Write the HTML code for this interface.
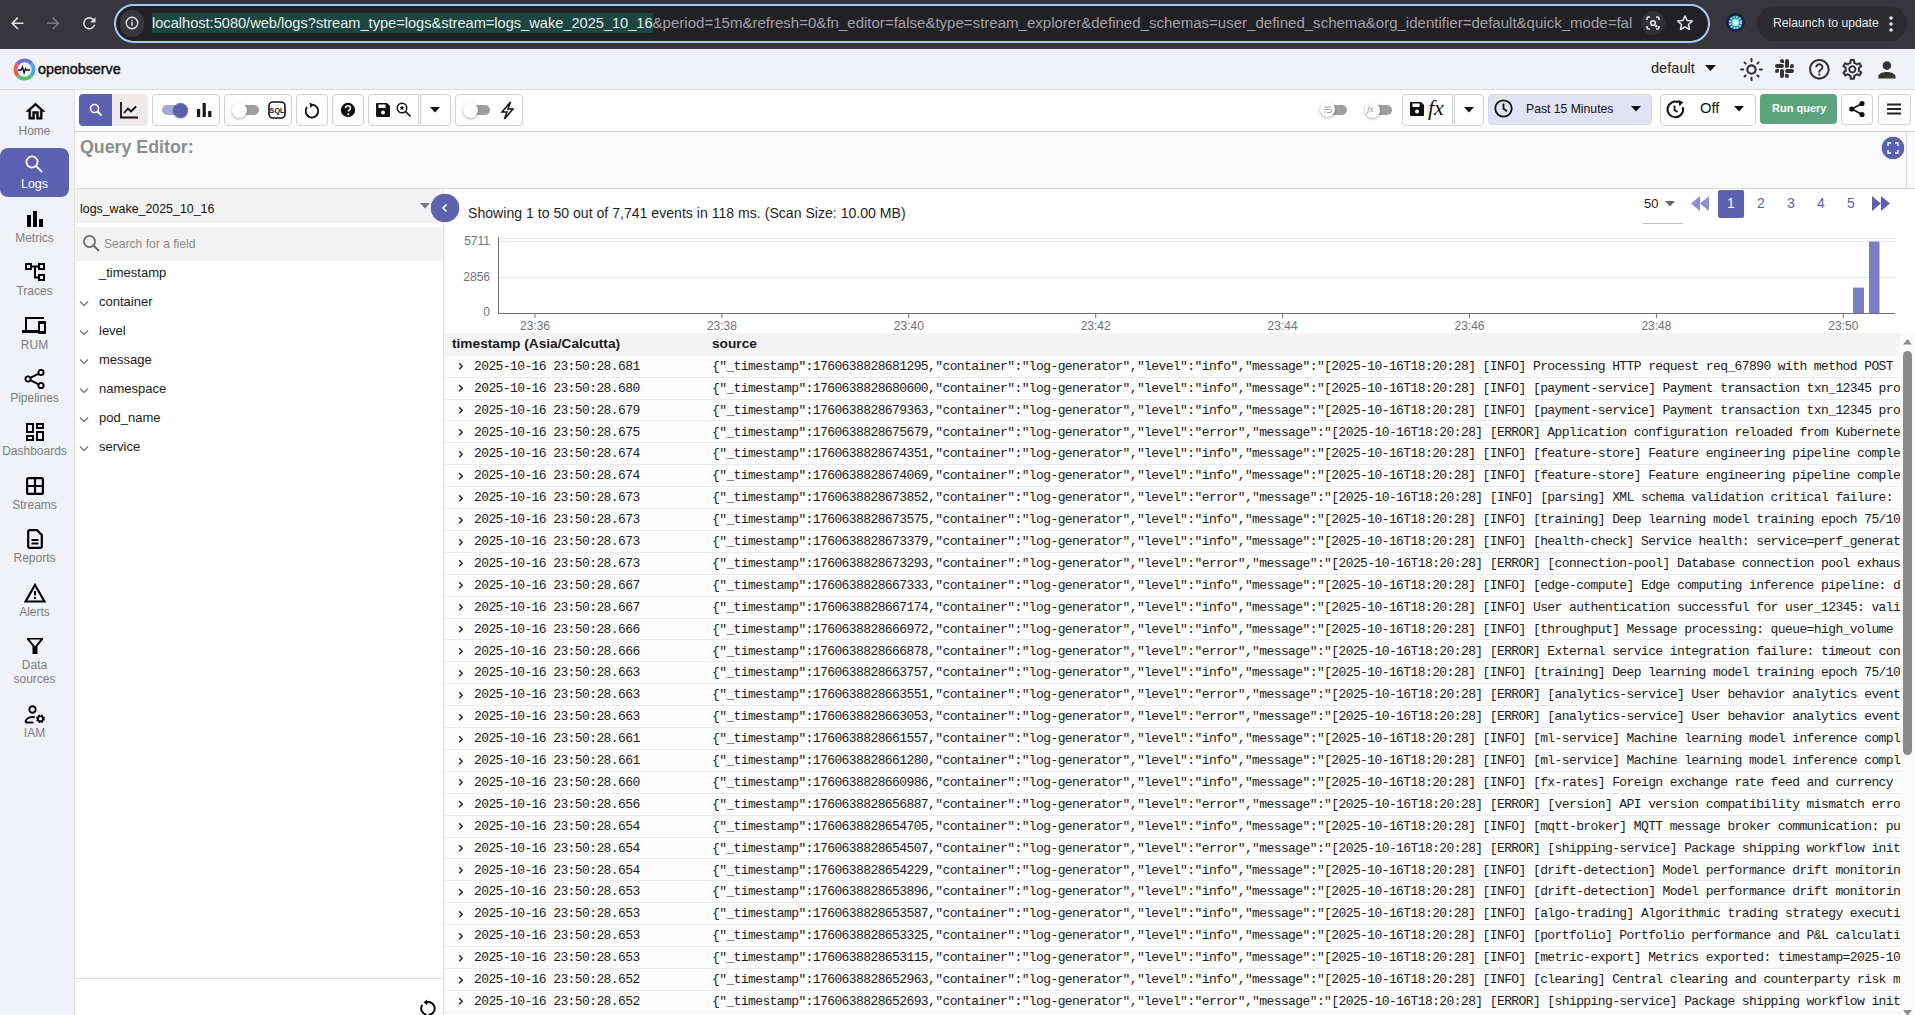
<!DOCTYPE html>
<html><head><meta charset="utf-8">
<style>
*{box-sizing:border-box;margin:0;padding:0}
html,body{width:1915px;height:1015px;overflow:hidden;background:#fff;font-family:"Liberation Sans",sans-serif;color:#000}
.abs{position:absolute}
svg{position:absolute;display:block}
/* chrome */
#chrome{position:absolute;left:0;top:0;width:1915px;height:49px;background:#37363c}
#omni{position:absolute;left:114px;top:4px;width:1596px;height:39px;border:2px solid #a8c7fa;border-radius:20px;background:#212125}
#url{position:absolute;left:152px;top:13px;height:20px;line-height:20px;font-size:14.6px;color:#a0a0a6;white-space:nowrap}
#url .sel{background:#1b4641;color:#e9ecec;display:inline-block;height:20px;line-height:20px;vertical-align:top}
#relaunch{position:absolute;left:1757px;top:6px;width:150px;height:35px;border-radius:18px;background:#2b2b30}
#relaunch span{position:absolute;left:16px;top:10px;font-size:12.2px;color:#e8e8ea;white-space:nowrap}
/* header */
#header{position:absolute;left:0;top:49px;width:1915px;height:41px;background:#f1f2f7;border-bottom:1px solid #dadada}
#logo-text{position:absolute;left:38px;top:61px;font-size:14.3px;font-weight:normal;-webkit-text-stroke:0.45px #111;color:#111}
#org{position:absolute;left:1651px;top:60px;font-size:14.6px;color:#222}
/* sidebar */
#side{position:absolute;left:0;top:90px;width:75px;height:925px;background:#f1f2f7;border-right:1px solid #dedede}
.nav{position:absolute;left:0px;width:69px;text-align:center;font-size:12px;color:#7d7d7d;line-height:14px}
#logsbox{position:absolute;left:0;top:148px;width:69px;height:49px;background:#5b60b1;border-radius:8px}
/* toolbar */
#toolbar{position:absolute;left:75px;top:90px;width:1840px;height:42px;background:#fff;border-bottom:1px solid #d8d8d8}
.btn{position:absolute;top:94px;height:32px;border:1px solid #cfcfcf;border-radius:4px;background:#fff}
/* query editor */
#qe{position:absolute;left:75px;top:132px;width:1840px;height:57px;background:#fafafa;border-bottom:1px solid #d8d8d8}
#qe-label{position:absolute;left:80px;top:137px;font-size:17.8px;font-weight:bold;color:#8d8d8d}
/* fields */
#fields{position:absolute;left:75px;top:189px;width:369px;height:826px;background:#fff;border-right:1px solid #e0e0e0}
#stream{position:absolute;left:75px;top:189px;width:368px;height:34px;background:#f2f2f2}
#fsearch{position:absolute;left:75px;top:227px;width:368px;height:34px;background:#f2f2f2}
.fname{position:absolute;left:99px;font-size:13px;color:#1a1a1a;white-space:nowrap}
/* results */
#showing{position:absolute;left:468px;top:205px;font-size:14.1px;color:#1f1f1f;white-space:nowrap}
.pg{position:absolute;top:195px;font-size:14px;color:#5b60b1}
.ylab{position:absolute;font-size:12px;color:#6e7079;text-align:right;width:40px;left:450px}
.xlab{position:absolute;top:319px;font-size:12px;color:#6e7079;width:50px;text-align:center}
#thead{position:absolute;left:444px;top:333px;width:1456px;height:23px;background:#f4f4f4}
.th{position:absolute;top:336px;font-size:13.7px;font-weight:bold;color:#1a1a1a;white-space:nowrap}
.row{position:absolute;left:444px;width:1456px;height:21.9px;border-bottom:1px solid #e9eaee;background:#fdfdfd;overflow:hidden;white-space:nowrap;font-family:"Liberation Mono",monospace;font-size:13px;letter-spacing:-0.6px;color:#1a1a1a}
.row svg{left:14px;top:6.5px}
.row .ts{position:absolute;left:30px;top:3px}
.row .src{position:absolute;left:268px;top:3px}
#sb{position:absolute;left:1900px;top:333px;width:15px;height:682px;background:#fafafa}
#thumb{position:absolute;left:1903px;top:351px;width:9px;height:404px;background:#8a8a8a;border-radius:5px}
</style></head><body>

<div id="chrome"></div>
<!-- back / fwd / reload -->
<svg style="left:7.8px;top:13.9px" width="18.6" height="18.6" viewBox="0 0 24 24"><path d="M20 11H7.83l5.59-5.59L12 4l-8 8 8 8 1.41-1.41L7.83 13H20v-2z" fill="#e3e3e3"/></svg>
<svg style="left:43.7px;top:13.9px" width="18.6" height="18.6" viewBox="0 0 24 24"><path d="M12 4l-1.41 1.41L16.17 11H4v2h12.17l-5.58 5.59L12 20l8-8z" fill="#7b7b80"/></svg>
<svg style="left:79.7px;top:13.6px" width="18.6" height="18.6" viewBox="0 0 24 24"><path d="M17.65 6.35A7.958 7.958 0 0 0 12 4a8 8 0 1 0 7.73 10h-2.08A6 6 0 1 1 12 6c1.66 0 3.14.69 4.22 1.78L13 11h7V4l-2.35 2.35z" fill="#e3e3e3"/></svg>
<div id="omni"></div>
<div class="abs" style="left:120px;top:10px;width:24px;height:27px;border-radius:13px;background:#36363b"></div>
<svg style="left:125px;top:16px" width="14" height="14" viewBox="0 0 14 14"><circle cx="7" cy="7" r="5.8" fill="none" stroke="#e6e6e6" stroke-width="1.4"/><rect x="6.3" y="6" width="1.4" height="4" fill="#e6e6e6"/><rect x="6.3" y="3.8" width="1.4" height="1.4" fill="#e6e6e6"/></svg>
<div id="url"><span class="sel">localhost:5080/web/logs?stream_type=logs&amp;stream=logs_wake_2025_10_16</span><span style="font-size:15.04px">&amp;period=15m&amp;refresh=0&amp;fn_editor=false&amp;type=stream_explorer&amp;defined_schemas=user_defined_schema&amp;org_identifier=default&amp;quick_mode=fal</span></div>
<div class="abs" style="left:1641px;top:11px;width:24px;height:24px;border-radius:12px;background:#303035"></div>
<svg style="left:1644px;top:14px" width="18" height="18" viewBox="0 0 18 18"><path d="M3 6V4.5A1.5 1.5 0 0 1 4.5 3H6M12 3h1.5A1.5 1.5 0 0 1 15 4.5V6M15 12v1.5a1.5 1.5 0 0 1-1.5 1.5H12M6 15H4.5A1.5 1.5 0 0 1 3 13.5V12" fill="none" stroke="#e6e6e6" stroke-width="1.6"/><circle cx="9" cy="9" r="2.3" fill="none" stroke="#e6e6e6" stroke-width="1.6"/><circle cx="12.3" cy="12.3" r="1.2" fill="#e6e6e6"/></svg>
<svg style="left:1675px;top:13px" width="20" height="20" viewBox="0 0 24 24"><path d="M12 3.5l2.6 5.6 6.1.6-4.6 4.1 1.3 6-5.4-3.1-5.4 3.1 1.3-6-4.6-4.1 6.1-.6z" fill="none" stroke="#e3e3e3" stroke-width="1.8" stroke-linejoin="round"/></svg>
<svg style="left:1724.5px;top:12.2px" width="21" height="21" viewBox="0 0 21 21"><circle cx="10.5" cy="10.5" r="9.5" fill="#1f1f45"/><circle cx="10.5" cy="10.5" r="7" fill="#1d6f8c"/><circle cx="10.5" cy="10.5" r="5.6" fill="none" stroke="#8eeaf5" stroke-width="2" stroke-dasharray="1.6 1.33"/><circle cx="10.5" cy="10.5" r="4" fill="#7fd9e6"/><circle cx="10.5" cy="10.5" r="2.5" fill="#f0ffff"/></svg>
<div id="relaunch"><span>Relaunch to update</span></div>
<svg style="left:1887px;top:14px" width="8" height="20" viewBox="0 0 8 20"><circle cx="4" cy="4" r="1.8" fill="#e3e3e3"/><circle cx="4" cy="10" r="1.8" fill="#e3e3e3"/><circle cx="4" cy="16" r="1.8" fill="#e3e3e3"/></svg>

<!-- app header -->
<div id="header"></div>
<svg style="left:13px;top:58px" width="23" height="23" viewBox="0 0 23 23">
<path d="M4.2 6.2 A9 9 0 0 1 18.3 5.5" fill="none" stroke="#6d6ee0" stroke-width="3.8"/>
<path d="M18.3 5.5 A9 9 0 0 1 17.8 18" fill="none" stroke="#45a5f0" stroke-width="3.8"/>
<path d="M17.8 18 A9 9 0 0 1 5 18" fill="none" stroke="#55c06e" stroke-width="3.8"/>
<path d="M5 18 A9 9 0 0 1 4.2 6.2" fill="none" stroke="#ef5a4a" stroke-width="3.8"/>
<path d="M5 12h3.2l1.3-3 1.6 6 1.4-4.5 0.9 1.5h3.6" fill="none" stroke="#111" stroke-width="1.3"/>
</svg>
<div id="logo-text">openobserve</div>
<div id="org">default</div>
<svg style="left:1705px;top:65px" width="12" height="7" viewBox="0 0 12 7"><path d="M0 0h11L5.5 6z" fill="#111"/></svg>
<!-- sun -->
<svg style="left:1739px;top:57px" width="25" height="25" viewBox="0 0 24 24"><path d="M12 9c1.65 0 3 1.35 3 3s-1.35 3-3 3-3-1.35-3-3 1.35-3 3-3m0-2c-2.76 0-5 2.24-5 5s2.24 5 5 5 5-2.24 5-5-2.24-5-5-5zM2 13h2c.55 0 1-.45 1-1s-.45-1-1-1H2c-.55 0-1 .45-1 1s.45 1 1 1zm18 0h2c.55 0 1-.45 1-1s-.45-1-1-1h-2c-.55 0-1 .45-1 1s.45 1 1 1zM11 2v2c0 .55.45 1 1 1s1-.45 1-1V2c0-.55-.45-1-1-1s-1 .45-1 1zm0 18v2c0 .55.45 1 1 1s1-.45 1-1v-2c0-.55-.45-1-1-1s-1 .45-1 1zM5.99 4.58a.996.996 0 0 0-1.41 0 .996.996 0 0 0 0 1.41l1.06 1.06c.39.39 1.03.39 1.41 0s.39-1.03 0-1.41L5.99 4.58zm12.37 12.37a.996.996 0 0 0-1.41 0 .996.996 0 0 0 0 1.41l1.06 1.06c.39.39 1.03.39 1.41 0a.996.996 0 0 0 0-1.41l-1.06-1.06zm1.06-10.96a.996.996 0 0 0 0-1.41.996.996 0 0 0-1.41 0l-1.06 1.06c-.39.39-.39 1.03 0 1.41s1.03.39 1.41 0l1.06-1.06zM7.05 18.36a.996.996 0 0 0 0-1.41.996.996 0 0 0-1.41 0l-1.06 1.06c-.39.39-.39 1.030 0 1.41s1.03.39 1.41 0l1.06-1.06z" fill="#333"/></svg>
<!-- slack -->
<svg style="left:1775px;top:59px" width="19" height="19" viewBox="0 0 24 24"><path d="M5.042 15.165a2.528 2.528 0 0 1-2.52 2.523A2.528 2.528 0 0 1 0 15.165a2.527 2.527 0 0 1 2.522-2.52h2.52v2.52zM6.313 15.165a2.527 2.527 0 0 1 2.521-2.52 2.527 2.527 0 0 1 2.521 2.52v6.313A2.528 2.528 0 0 1 8.834 24a2.528 2.528 0 0 1-2.521-2.522v-6.313zM8.834 5.042a2.528 2.528 0 0 1-2.521-2.52A2.528 2.528 0 0 1 8.834 0a2.528 2.528 0 0 1 2.521 2.522v2.52H8.834zM8.834 6.313a2.528 2.528 0 0 1 2.521 2.521 2.528 2.528 0 0 1-2.521 2.521H2.522A2.528 2.528 0 0 1 0 8.834a2.528 2.528 0 0 1 2.522-2.521h6.312zM18.956 8.834a2.528 2.528 0 0 1 2.522-2.521A2.528 2.528 0 0 1 24 8.834a2.528 2.528 0 0 1-2.522 2.521h-2.522V8.834zM17.688 8.834a2.528 2.528 0 0 1-2.523 2.521 2.527 2.527 0 0 1-2.52-2.521V2.522A2.527 2.527 0 0 1 15.165 0a2.528 2.528 0 0 1 2.523 2.522v6.312zM15.165 18.956a2.528 2.528 0 0 1 2.523 2.522A2.528 2.528 0 0 1 15.165 24a2.527 2.527 0 0 1-2.52-2.522v-2.522h2.52zM15.165 17.688a2.527 2.527 0 0 1-2.52-2.523 2.526 2.526 0 0 1 2.52-2.52h6.313A2.527 2.527 0 0 1 24 15.165a2.528 2.528 0 0 1-2.522 2.523h-6.313z" fill="#333"/></svg>
<!-- help -->
<svg style="left:1806.7px;top:57px" width="24.7" height="24.7" viewBox="0 0 24 24"><path d="M11 18h2v-2h-2v2zm1-16C6.48 2 2 6.48 2 12s4.48 10 10 10 10-4.48 10-10S17.52 2 12 2zm0 18c-4.41 0-8-3.59-8-8s3.59-8 8-8 8 3.59 8 8-3.59 8-8 8zm0-14c-2.21 0-4 1.79-4 4h2c0-1.1.9-2 2-2s2 .9 2 2c0 2-3 1.75-3 5h2c0-2.25 3-2.5 3-5 0-2.21-1.79-4-4-4z" fill="#333"/></svg>
<!-- gear -->
<svg style="left:1839.5px;top:57px" width="24.7" height="24.7" viewBox="0 0 24 24"><path d="M19.43 12.98c.04-.32.07-.64.07-.98 0-.34-.03-.66-.07-.98l2.11-1.65c.19-.15.24-.42.12-.64l-2-3.46a.5.5 0 0 0-.61-.22l-2.49 1c-.52-.4-1.08-.73-1.69-.98l-.38-2.65A.488.488 0 0 0 14 2h-4c-.25 0-.46.18-.49.42l-.38 2.65c-.61.25-1.17.59-1.69.98l-2.49-1a.566.566 0 0 0-.18-.03c-.17 0-.34.09-.43.25l-2 3.46c-.13.22-.07.49.12.64l2.11 1.65c-.04.32-.07.65-.07.98 0 .33.03.66.07.98l-2.11 1.65c-.19.15-.24.42-.12.64l2 3.46a.5.5 0 0 0 .61.22l2.49-1c.52.4 1.08.73 1.69.98l.38 2.65c.03.24.24.42.49.42h4c.25 0 .46-.18.49-.42l.38-2.65c.61-.25 1.17-.59 1.69-.98l2.49 1c.06.02.12.03.18.03.17 0 .34-.09.43-.25l2-3.46c.12-.22.07-.49-.12-.64l-2.11-1.65zm-1.98-1.71c.04.31.05.52.05.73 0 .21-.02.43-.05.73l-.14 1.13.89.7 1.08.84-.7 1.21-1.27-.51-1.04-.42-.9.68c-.43.32-.84.56-1.250.73l-1.06.43-.16 1.13-.2 1.35h-1.4l-.19-1.35-.16-1.13-1.06-.43c-.43-.18-.83-.41-1.23-.71l-.91-.7-1.06.43-1.27.51-.7-1.21 1.08-.84.89-.7-.14-1.13c-.03-.31-.05-.54-.05-.74s.02-.43.05-.73l.14-1.13-.89-.7-1.08-.84.7-1.21 1.27.51 1.04.42.9-.68c.43-.32.84-.56 1.25-.73l1.06-.43.16-1.13.2-1.35h1.39l.19 1.35.16 1.13 1.06.43c.43.18.83.41 1.23.71l.91.7 1.06-.43 1.27-.51.7 1.21-1.07.85-.89.7.14 1.13zM12 8c-2.21 0-4 1.79-4 4s1.79 4 4 4 4-1.79 4-4-1.79-4-4-4zm0 6c-1.1 0-2-.9-2-2s.9-2 2-2 2 .9 2 2-.9 2-2 2z" fill="#333"/></svg>
<!-- person -->
<svg style="left:1873.5px;top:56.7px" width="25.8" height="25.8" viewBox="0 0 24 24"><path d="M12 12c2.21 0 4-1.79 4-4s-1.79-4-4-4-4 1.79-4 4 1.79 4 4 4zm0 2c-2.67 0-8 1.34-8 4v2h16v-2c0-2.66-5.33-4-8-4z" fill="#333"/></svg>

<!-- sidebar -->
<div id="side"></div>
<div id="logsbox"></div>
<svg style="left:23.5px;top:100px" width="23" height="23" viewBox="0 0 24 24"><path d="M12 5.69l5 4.5V18h-2v-6H9v6H7v-7.81l5-4.5M12 3L2 12h3v8h6v-6h2v6h6v-8h3L12 3z" fill="#000" stroke="#000" stroke-width="0.5"/></svg>
<div class="nav" style="top:124px">Home</div>
<svg style="left:23px;top:153px" width="20" height="20" viewBox="0 0 20 20"><circle cx="9" cy="9" r="5.6" fill="none" stroke="#fff" stroke-width="1.8"/><path d="M13.2 13.2l5.3 5.3" stroke="#fff" stroke-width="1.9" stroke-linecap="round"/></svg>
<div class="nav" style="top:177px;color:#fff;font-size:12.5px">Logs</div>
<svg style="left:27px;top:211px" width="16" height="16" viewBox="0 0 16 16"><rect x="0" y="4" width="4" height="12" fill="#000"/><rect x="6" y="0" width="4" height="16" fill="#000"/><rect x="12" y="8" width="4" height="8" fill="#000"/></svg>
<div class="nav" style="top:231px">Metrics</div>
<svg style="left:25px;top:263px" width="20" height="18" viewBox="0 0 20 18"><g fill="none" stroke="#000" stroke-width="2"><rect x="1" y="1" width="5" height="5"/><rect x="14" y="1" width="5" height="5"/><rect x="14" y="12" width="5" height="5"/><path d="M6 3.5h8M10 3.5v11h4"/></g></svg>
<div class="nav" style="top:284px">Traces</div>
<svg style="left:22px;top:317px" width="25" height="17" viewBox="0 0 25 17"><g fill="#000"><rect x="3" y="0" width="19" height="2"/><rect x="3" y="0" width="2" height="14"/><rect x="0" y="13" width="16" height="3"/><rect x="16" y="4" width="8" height="13" rx="1"/></g><rect x="18" y="7" width="4" height="7" fill="#f1f2f7"/></svg>
<div class="nav" style="top:338px">RUM</div>
<svg style="left:24px;top:369px" width="21" height="20" viewBox="0 0 21 20"><g fill="none" stroke="#000" stroke-width="1.9"><circle cx="4" cy="10" r="2.6"/><circle cx="17" cy="3.5" r="2.6"/><circle cx="17" cy="16.5" r="2.6"/><path d="M6.3 8.8l8.4-4.1M6.3 11.2l8.4 4.1"/></g></svg>
<div class="nav" style="top:391px">Pipelines</div>
<svg style="left:26px;top:423px" width="18" height="18" viewBox="0 0 18 18"><g fill="none" stroke="#000" stroke-width="2"><rect x="1" y="1" width="6" height="8"/><rect x="11" y="1" width="6" height="4"/><rect x="11" y="9" width="6" height="8"/><rect x="1" y="13" width="6" height="4"/></g></svg>
<div class="nav" style="top:444px">Dashboards</div>
<svg style="left:26px;top:477px" width="18" height="18" viewBox="0 0 18 18"><g fill="none" stroke="#000" stroke-width="2.2"><rect x="1.1" y="1.1" width="15.8" height="15.8" rx="1.5"/><path d="M9 1v16M1 9h16"/></g></svg>
<div class="nav" style="top:498px">Streams</div>
<svg style="left:27px;top:529px" width="16" height="20" viewBox="0 0 16 20"><path d="M1.2 2.5a1.3 1.3 0 0 1 1.3-1.3h7.5l4.8 4.8v11.5a1.3 1.3 0 0 1-1.3 1.3h-11a1.3 1.3 0 0 1-1.3-1.3z" fill="none" stroke="#000" stroke-width="2.2"/><path d="M4.5 11h7M4.5 14.5h7" stroke="#000" stroke-width="2"/></svg>
<div class="nav" style="top:551px">Reports</div>
<svg style="left:24px;top:583px" width="22" height="20" viewBox="0 0 22 20"><path d="M11 2L1.5 18.5h19z" fill="none" stroke="#000" stroke-width="2.2" stroke-linejoin="miter"/><rect x="10" y="8" width="2" height="4.5" fill="#000"/><rect x="10" y="14" width="2" height="2" fill="#000"/></svg>
<div class="nav" style="top:605px">Alerts</div>
<svg style="left:27px;top:638px" width="16" height="16" viewBox="0 0 16 16"><path d="M0.5 0.5h15L9.5 8v7.5h-3V8z" fill="none" stroke="#000" stroke-width="2" stroke-linejoin="miter"/><rect x="6.5" y="8" width="3" height="7.5" fill="#000"/></svg>
<div class="nav" style="top:658px">Data<br>sources</div>
<svg style="left:24px;top:705px" width="22" height="19" viewBox="0 0 22 19"><g fill="none" stroke="#000" stroke-width="1.9"><circle cx="8.5" cy="4.5" r="3.2"/><path d="M1.5 17.5c0-3.5 3-5.5 7-5.5 .8 0 1.6.1 2.3.3"/><path d="M1.5 17.5h8"/></g><circle cx="16.5" cy="13.8" r="3.1" fill="none" stroke="#000" stroke-width="2.6" stroke-dasharray="1.5 0.95"/><circle cx="16.5" cy="13.8" r="2.6" fill="none" stroke="#000" stroke-width="1.6"/></svg>
<div class="nav" style="top:726px">IAM</div>

<!-- toolbar -->
<div id="toolbar"></div>
<div class="abs" style="left:79px;top:94px;width:33px;height:32px;background:#5b60b1;border-radius:4px 0 0 4px"></div>
<div class="abs" style="left:112px;top:94px;width:36px;height:32px;background:#efe9e9;border-radius:0 4px 4px 0"></div>
<svg style="left:88px;top:102px" width="16" height="16" viewBox="0 0 16 16"><circle cx="6.5" cy="6.5" r="4" fill="none" stroke="#fff" stroke-width="1.6"/><path d="M9.5 9.5l4 4" stroke="#fff" stroke-width="1.8"/></svg>
<svg style="left:120px;top:101px" width="19" height="18" viewBox="0 0 19 18"><path d="M1 1v15.5h17" fill="none" stroke="#111" stroke-width="1.8"/><path d="M4 12l4-4.5 3 3 5-5" fill="none" stroke="#111" stroke-width="1.8"/></svg>

<div class="btn" style="left:152px;width:68px"></div>
<div class="abs" style="left:162px;top:105px;width:24px;height:10px;border-radius:5px;background:#a5a8d8"></div>
<div class="abs" style="left:173px;top:103px;width:15px;height:15px;border-radius:8px;background:#5b60b1;box-shadow:0 1px 2px rgba(0,0,0,.25)"></div>
<svg style="left:197px;top:103px" width="15" height="14" viewBox="0 0 15 14"><rect x="0" y="6" width="3.2" height="8" fill="#1a1a1a"/><rect x="5.6" y="0" width="3.2" height="14" fill="#1a1a1a"/><rect x="11.2" y="8" width="3.2" height="6" fill="#1a1a1a"/></svg>

<div class="btn" style="left:224px;width:68px"></div>
<div class="abs" style="left:235px;top:105px;width:24px;height:10px;border-radius:5px;background:#9e9e9e"></div>
<div class="abs" style="left:232px;top:103px;width:15px;height:15px;border-radius:8px;background:#fff;box-shadow:0 1px 3px rgba(0,0,0,.35)"></div>
<svg style="left:268px;top:101px" width="18" height="18" viewBox="0 0 18 18"><rect x="1" y="1" width="16" height="16" rx="4" fill="none" stroke="#111" stroke-width="1.6"/><text x="9" y="12.3" font-family="Liberation Sans" font-size="7.2" font-weight="bold" text-anchor="middle" fill="#111">SQL</text></svg>

<div class="btn" style="left:296px;width:32px"></div>
<svg style="left:302px;top:101px" width="20" height="20" viewBox="0 0 20 20"><path d="M5 6.2A6.3 6.3 0 1 0 10 3.8" fill="none" stroke="#111" stroke-width="1.9"/><path d="M7.5 1.2l4 2.6-3.2 3.2z" fill="#111"/></svg>

<div class="btn" style="left:332px;width:32px;border-color:#c9cbee"></div>
<svg style="left:340px;top:102px" width="16" height="16" viewBox="0 0 16 16"><circle cx="8" cy="8" r="7.2" fill="#111"/><path d="M5.6 6.2a2.4 2.4 0 0 1 4.8 0c0 1.6-2.1 1.6-2.1 3.4" fill="none" stroke="#fff" stroke-width="1.6"/><circle cx="8.3" cy="12.2" r="1" fill="#fff"/></svg>

<div class="btn" style="left:368px;width:51px;border-radius:4px 0 0 4px"></div>
<div class="btn" style="left:420px;width:31px;border-radius:0 4px 4px 0"></div>
<svg style="left:375px;top:102px" width="16" height="16" viewBox="0 0 16 16"><path d="M1 2a1 1 0 0 1 1-1h10l3 3v10a1 1 0 0 1-1 1H2a1 1 0 0 1-1-1z" fill="#111"/><rect x="3.5" y="2.5" width="7" height="3.5" fill="#fff"/><circle cx="8" cy="10.5" r="2" fill="#fff"/></svg>
<svg style="left:396px;top:102px" width="16" height="16" viewBox="0 0 16 16"><circle cx="6" cy="6" r="4.8" fill="none" stroke="#111" stroke-width="1.4"/><path d="M9.5 9.5l5 5" stroke="#111" stroke-width="1.7"/><path d="M6 3.4l.8 1.6 1.7.2-1.3 1.2.4 1.7L6 7.2l-1.6.9.4-1.7-1.3-1.2 1.7-.2z" fill="#111"/></svg>
<svg style="left:430px;top:107px" width="10" height="6" viewBox="0 0 10 6"><path d="M0 0h10L5 5.5z" fill="#111"/></svg>

<div class="btn" style="left:455px;width:68px"></div>
<div class="abs" style="left:466px;top:105px;width:24px;height:10px;border-radius:5px;background:#9e9e9e"></div>
<div class="abs" style="left:463px;top:103px;width:15px;height:15px;border-radius:8px;background:#fff;box-shadow:0 1px 3px rgba(0,0,0,.35)"></div>
<svg style="left:500px;top:101px" width="15" height="19" viewBox="0 0 15 19"><path d="M10.5 1L2 11h5l-2.5 7L13 8H8z" fill="none" stroke="#111" stroke-width="1.5" stroke-linejoin="miter"/></svg>

<!-- right toolbar -->
<div class="abs" style="left:1327px;top:105px;width:20px;height:10px;border-radius:5px;background:#9e9e9e"></div>
<div class="abs" style="left:1320px;top:102px;width:15px;height:15px;border-radius:8px;background:#fff;box-shadow:0 1px 3px rgba(0,0,0,.35)"></div>
<svg style="left:1323px;top:105px" width="9" height="9" viewBox="0 0 9 9"><path d="M1 2h7M1 4.5h6a1.5 1.5 0 0 1 0 3H4M1 7h2" fill="none" stroke="#999" stroke-width=".9"/></svg>
<div class="abs" style="left:1372px;top:105px;width:20px;height:10px;border-radius:5px;background:#9e9e9e"></div>
<div class="abs" style="left:1365px;top:103px;width:15px;height:15px;border-radius:8px;background:#fff;box-shadow:0 1px 3px rgba(0,0,0,.35)"></div>
<div class="abs" style="left:1367px;top:104px;font-family:'Liberation Serif',serif;font-style:italic;font-size:9px;color:#888">fx</div>

<div class="btn" style="left:1402px;width:51px;border-radius:4px 0 0 4px"></div>
<div class="btn" style="left:1454px;width:30px;border-radius:0 4px 4px 0"></div>
<svg style="left:1409px;top:101px" width="16" height="16" viewBox="0 0 16 16"><path d="M1 2a1 1 0 0 1 1-1h10l3 3v10a1 1 0 0 1-1 1H2a1 1 0 0 1-1-1z" fill="#111"/><rect x="3.5" y="2.5" width="7" height="3.5" fill="#fff"/><circle cx="8" cy="10.5" r="2" fill="#fff"/></svg>
<div class="abs" style="left:1428px;top:95px;font-family:'Liberation Serif',serif;font-style:italic;font-size:22px;color:#111">fx</div>
<svg style="left:1464px;top:107px" width="10" height="6" viewBox="0 0 10 6"><path d="M0 0h10L5 5.5z" fill="#111"/></svg>

<div class="abs" style="left:1488px;top:94px;width:164px;height:31px;border-radius:4px;background:#e1e2f3;border:1px solid #d6d7ea"></div>
<svg style="left:1493px;top:98px" width="21" height="21" viewBox="0 0 21 21"><circle cx="10.5" cy="10.5" r="8.2" fill="none" stroke="#111" stroke-width="1.8"/><path d="M10.5 5.5v5.2l3.4 2.6" fill="none" stroke="#111" stroke-width="1.8"/></svg>
<div class="abs" style="left:1526px;top:102px;font-size:12.2px;color:#111;white-space:nowrap">Past 15 Minutes</div>
<svg style="left:1631px;top:106px" width="10" height="6" viewBox="0 0 10 6"><path d="M0 0h10L5 5.5z" fill="#111"/></svg>

<div class="btn" style="left:1660px;width:96px"></div>
<svg style="left:1665px;top:99px" width="21" height="21" viewBox="0 0 21 21"><path d="M17.8 8.2A7.8 7.8 0 1 1 13.5 3.3" fill="none" stroke="#111" stroke-width="2"/><path d="M13 0.8l5.3 2.5-3.8 4z" fill="#111"/><path d="M9.5 6.5v4.5l3 2" fill="none" stroke="#111" stroke-width="1.8"/></svg>
<div class="abs" style="left:1700px;top:100px;font-size:14.8px;color:#111">Off</div>
<svg style="left:1734px;top:106px" width="10" height="6" viewBox="0 0 10 6"><path d="M0 0h10L5 5.5z" fill="#111"/></svg>

<div class="abs" style="left:1760px;top:94px;width:77px;height:30px;border-radius:4px;background:#5ba47e"></div>
<div class="abs" style="left:1772px;top:102px;font-size:11px;font-weight:bold;color:#fff;white-space:nowrap">Run query</div>

<div class="btn" style="left:1841px;width:32px;height:31px"></div>
<svg style="left:1848px;top:100px" width="18" height="18" viewBox="0 0 18 18"><g fill="#111"><circle cx="14" cy="3.5" r="2.6"/><circle cx="3.8" cy="9" r="2.6"/><circle cx="14" cy="14.5" r="2.6"/></g><path d="M14 3.5L3.8 9l10.2 5.5" fill="none" stroke="#111" stroke-width="1.6"/></svg>
<div class="btn" style="left:1878px;width:33px;height:31px"></div>
<svg style="left:1886px;top:102px" width="16" height="14" viewBox="0 0 16 14"><g fill="#222"><rect x="1" y="1.5" width="14" height="2"/><rect x="1" y="6" width="14" height="2"/><rect x="1" y="10.5" width="14" height="2"/></g></svg>

<!-- query editor -->
<div id="qe"></div>
<div id="qe-label">Query Editor:</div>
<div class="abs" style="left:1906px;top:132px;width:1px;height:57px;background:#dcdcdc"></div>
<div class="abs" style="left:1882px;top:137px;width:22px;height:22px;border-radius:11px;background:#5b60b1;box-shadow:0 0 1px #333"></div>
<svg style="left:1886px;top:141px" width="14" height="14" viewBox="0 0 14 14"><path d="M2 5V2h3M9 2h3v3M12 9v3H9M5 12H2V9" fill="none" stroke="#fff" stroke-width="1.4"/></svg>

<!-- field panel -->
<div id="fields"></div>
<div id="stream"></div>
<div class="abs" style="left:80px;top:202px;font-size:12.4px;color:#111;white-space:nowrap">logs_wake_2025_10_16</div>
<svg style="left:420px;top:203px" width="10" height="6" viewBox="0 0 10 6"><path d="M0 0h10L5 5.5z" fill="#777"/></svg>
<div class="abs" style="left:443px;top:189px;width:1px;height:826px;background:#dedede"></div>
<div class="abs" style="left:431px;top:194px;width:28px;height:28px;border-radius:14px;background:#5b60b1;box-shadow:0 0 1px #555"></div>
<svg style="left:439px;top:202px" width="12" height="12" viewBox="0 0 12 12"><path d="M7.5 2.5L4 6l3.5 3.5" fill="none" stroke="#fff" stroke-width="1.6"/></svg>
<div id="fsearch"></div>
<svg style="left:82px;top:234px" width="19" height="19" viewBox="0 0 19 19"><circle cx="7.5" cy="7.5" r="5.6" fill="none" stroke="#666" stroke-width="1.7"/><path d="M11.5 11.5l5.5 5.5" stroke="#666" stroke-width="1.9"/></svg>
<div class="abs" style="left:104px;top:237px;font-size:12.1px;color:#8a8a8a;white-space:nowrap">Search for a field</div>
<div class="fname" style="top:265px">_timestamp</div>
<div class="fname" style="top:294px">container</div>
<div class="fname" style="top:323px">level</div>
<div class="fname" style="top:352px">message</div>
<div class="fname" style="top:381px">namespace</div>
<div class="fname" style="top:410px">pod_name</div>
<div class="fname" style="top:439px">service</div>
<svg style="left:79px;top:299.5px" width="10" height="160" viewBox="0 0 10 160">
<g fill="none" stroke="#7a7a7a" stroke-width="1.4"><path d="M1 1.5l4 4 4-4"/><path d="M1 30.5l4 4 4-4"/><path d="M1 59.5l4 4 4-4"/><path d="M1 88.5l4 4 4-4"/><path d="M1 117.5l4 4 4-4"/><path d="M1 146.5l4 4 4-4"/></g></svg>
<div class="abs" style="left:75px;top:978px;width:368px;height:1px;background:#dedede"></div>
<svg style="left:419px;top:998px" width="17" height="17" viewBox="0 0 17 17"><path d="M7.2 4.5A6.3 6.3 0 1 1 9.59 16.7M7.41 16.7A6.3 6.3 0 0 1 3.34 6.89" fill="none" stroke="#000" stroke-width="1.9"/><path d="M4.6 4.3L8.2 1.4V7.2z" fill="#000"/></svg>

<!-- results -->
<div id="showing">Showing 1 to 50 out of 7,741 events in 118 ms. (Scan Size: 10.00 MB)</div>
<div class="abs" style="left:1644px;top:196px;font-size:13px;color:#222">50</div>
<svg style="left:1665px;top:201px" width="10" height="6" viewBox="0 0 10 6"><path d="M0 0h10L5 5.5z" fill="#666"/></svg>
<div class="abs" style="left:1643px;top:223px;width:40px;height:1px;background:#bdbdbd"></div>
<svg style="left:1691px;top:196px" width="19" height="15" viewBox="0 0 19 15"><path d="M9 0v15L0 7.5z" fill="#8c90cf"/><path d="M18 0v15L9 7.5z" fill="#8c90cf"/></svg>
<div class="abs" style="left:1718px;top:190px;width:26px;height:28px;border-radius:2px;background:#5b60b1"></div>
<div class="pg" style="left:1727px;color:#fff">1</div>
<div class="pg" style="left:1757px">2</div>
<div class="pg" style="left:1787px">3</div>
<div class="pg" style="left:1817px">4</div>
<div class="pg" style="left:1847px">5</div>
<svg style="left:1872px;top:196px" width="19" height="15" viewBox="0 0 19 15"><path d="M0 0v15l9-7.5z" fill="#5b60b1"/><path d="M9 0v15l9-7.5z" fill="#5b60b1"/></svg>

<!-- chart -->
<svg style="left:444px;top:230px" width="1456" height="103" viewBox="0 0 1456 103">
<g stroke="#e0e6f1" stroke-width="1"><path d="M54 8.5H1451M54 11.5H1451M54 47.5H1451"/></g>
<path d="M54.5 7v76" stroke="#6e7079" stroke-width="1"/>
<path d="M54 83.5H1451" stroke="#6e7079" stroke-width="1"/>
<g stroke="#6e7079" stroke-width="1"><path d="M91.0 83v5"/><path d="M277.9 83v5"/><path d="M464.8 83v5"/><path d="M651.7 83v5"/><path d="M838.6 83v5"/><path d="M1025.5 83v5"/><path d="M1212.4 83v5"/><path d="M1399.3 83v5"/></g>
<rect x="1409" y="57.6" width="11" height="25.4" fill="#7a7ec6"/>
<rect x="1425" y="11.6" width="10.5" height="71.4" fill="#7a7ec6"/>
</svg>
<div class="ylab" style="top:234px">5711</div>
<div class="ylab" style="top:270px">2856</div>
<div class="ylab" style="top:305px">0</div>
<div class="xlab" style="left:510.0px">23:36</div>
<div class="xlab" style="left:696.9px">23:38</div>
<div class="xlab" style="left:883.8px">23:40</div>
<div class="xlab" style="left:1070.7px">23:42</div>
<div class="xlab" style="left:1257.6px">23:44</div>
<div class="xlab" style="left:1444.5px">23:46</div>
<div class="xlab" style="left:1631.4px">23:48</div>
<div class="xlab" style="left:1818.3px">23:50</div>

<!-- table -->
<div id="thead"></div>
<div class="th" style="left:452px">timestamp (Asia/Calcutta)</div>
<div class="th" style="left:712px">source</div>
<div class="row" style="top:355.80px"><svg width="7" height="9" viewBox="0 0 7 9"><path d="M1.2 1.2l3 3L1.2 7.2" fill="none" stroke="#222" stroke-width="1.4"/></svg><span class="ts">2025-10-16 23:50:28.681</span><span class="src">{"_timestamp":1760638828681295,"container":"log-generator","level":"info","message":"[2025-10-16T18:20:28] [INFO] Processing HTTP request req_67890 with method POST</span></div>
<div class="row" style="top:377.70px"><svg width="7" height="9" viewBox="0 0 7 9"><path d="M1.2 1.2l3 3L1.2 7.2" fill="none" stroke="#222" stroke-width="1.4"/></svg><span class="ts">2025-10-16 23:50:28.680</span><span class="src">{"_timestamp":1760638828680600,"container":"log-generator","level":"info","message":"[2025-10-16T18:20:28] [INFO] [payment-service] Payment transaction txn_12345 pro</span></div>
<div class="row" style="top:399.60px"><svg width="7" height="9" viewBox="0 0 7 9"><path d="M1.2 1.2l3 3L1.2 7.2" fill="none" stroke="#222" stroke-width="1.4"/></svg><span class="ts">2025-10-16 23:50:28.679</span><span class="src">{"_timestamp":1760638828679363,"container":"log-generator","level":"info","message":"[2025-10-16T18:20:28] [INFO] [payment-service] Payment transaction txn_12345 pro</span></div>
<div class="row" style="top:421.50px"><svg width="7" height="9" viewBox="0 0 7 9"><path d="M1.2 1.2l3 3L1.2 7.2" fill="none" stroke="#222" stroke-width="1.4"/></svg><span class="ts">2025-10-16 23:50:28.675</span><span class="src">{"_timestamp":1760638828675679,"container":"log-generator","level":"error","message":"[2025-10-16T18:20:28] [ERROR] Application configuration reloaded from Kubernete</span></div>
<div class="row" style="top:443.40px"><svg width="7" height="9" viewBox="0 0 7 9"><path d="M1.2 1.2l3 3L1.2 7.2" fill="none" stroke="#222" stroke-width="1.4"/></svg><span class="ts">2025-10-16 23:50:28.674</span><span class="src">{"_timestamp":1760638828674351,"container":"log-generator","level":"info","message":"[2025-10-16T18:20:28] [INFO] [feature-store] Feature engineering pipeline comple</span></div>
<div class="row" style="top:465.30px"><svg width="7" height="9" viewBox="0 0 7 9"><path d="M1.2 1.2l3 3L1.2 7.2" fill="none" stroke="#222" stroke-width="1.4"/></svg><span class="ts">2025-10-16 23:50:28.674</span><span class="src">{"_timestamp":1760638828674069,"container":"log-generator","level":"info","message":"[2025-10-16T18:20:28] [INFO] [feature-store] Feature engineering pipeline comple</span></div>
<div class="row" style="top:487.20px"><svg width="7" height="9" viewBox="0 0 7 9"><path d="M1.2 1.2l3 3L1.2 7.2" fill="none" stroke="#222" stroke-width="1.4"/></svg><span class="ts">2025-10-16 23:50:28.673</span><span class="src">{"_timestamp":1760638828673852,"container":"log-generator","level":"error","message":"[2025-10-16T18:20:28] [INFO] [parsing] XML schema validation critical failure: </span></div>
<div class="row" style="top:509.10px"><svg width="7" height="9" viewBox="0 0 7 9"><path d="M1.2 1.2l3 3L1.2 7.2" fill="none" stroke="#222" stroke-width="1.4"/></svg><span class="ts">2025-10-16 23:50:28.673</span><span class="src">{"_timestamp":1760638828673575,"container":"log-generator","level":"info","message":"[2025-10-16T18:20:28] [INFO] [training] Deep learning model training epoch 75/10</span></div>
<div class="row" style="top:531.00px"><svg width="7" height="9" viewBox="0 0 7 9"><path d="M1.2 1.2l3 3L1.2 7.2" fill="none" stroke="#222" stroke-width="1.4"/></svg><span class="ts">2025-10-16 23:50:28.673</span><span class="src">{"_timestamp":1760638828673379,"container":"log-generator","level":"info","message":"[2025-10-16T18:20:28] [INFO] [health-check] Service health: service=perf_generat</span></div>
<div class="row" style="top:552.90px"><svg width="7" height="9" viewBox="0 0 7 9"><path d="M1.2 1.2l3 3L1.2 7.2" fill="none" stroke="#222" stroke-width="1.4"/></svg><span class="ts">2025-10-16 23:50:28.673</span><span class="src">{"_timestamp":1760638828673293,"container":"log-generator","level":"error","message":"[2025-10-16T18:20:28] [ERROR] [connection-pool] Database connection pool exhaus</span></div>
<div class="row" style="top:574.80px"><svg width="7" height="9" viewBox="0 0 7 9"><path d="M1.2 1.2l3 3L1.2 7.2" fill="none" stroke="#222" stroke-width="1.4"/></svg><span class="ts">2025-10-16 23:50:28.667</span><span class="src">{"_timestamp":1760638828667333,"container":"log-generator","level":"info","message":"[2025-10-16T18:20:28] [INFO] [edge-compute] Edge computing inference pipeline: d</span></div>
<div class="row" style="top:596.70px"><svg width="7" height="9" viewBox="0 0 7 9"><path d="M1.2 1.2l3 3L1.2 7.2" fill="none" stroke="#222" stroke-width="1.4"/></svg><span class="ts">2025-10-16 23:50:28.667</span><span class="src">{"_timestamp":1760638828667174,"container":"log-generator","level":"info","message":"[2025-10-16T18:20:28] [INFO] User authentication successful for user_12345: vali</span></div>
<div class="row" style="top:618.60px"><svg width="7" height="9" viewBox="0 0 7 9"><path d="M1.2 1.2l3 3L1.2 7.2" fill="none" stroke="#222" stroke-width="1.4"/></svg><span class="ts">2025-10-16 23:50:28.666</span><span class="src">{"_timestamp":1760638828666972,"container":"log-generator","level":"info","message":"[2025-10-16T18:20:28] [INFO] [throughput] Message processing: queue=high_volume </span></div>
<div class="row" style="top:640.50px"><svg width="7" height="9" viewBox="0 0 7 9"><path d="M1.2 1.2l3 3L1.2 7.2" fill="none" stroke="#222" stroke-width="1.4"/></svg><span class="ts">2025-10-16 23:50:28.666</span><span class="src">{"_timestamp":1760638828666878,"container":"log-generator","level":"error","message":"[2025-10-16T18:20:28] [ERROR] External service integration failure: timeout con</span></div>
<div class="row" style="top:662.40px"><svg width="7" height="9" viewBox="0 0 7 9"><path d="M1.2 1.2l3 3L1.2 7.2" fill="none" stroke="#222" stroke-width="1.4"/></svg><span class="ts">2025-10-16 23:50:28.663</span><span class="src">{"_timestamp":1760638828663757,"container":"log-generator","level":"info","message":"[2025-10-16T18:20:28] [INFO] [training] Deep learning model training epoch 75/10</span></div>
<div class="row" style="top:684.30px"><svg width="7" height="9" viewBox="0 0 7 9"><path d="M1.2 1.2l3 3L1.2 7.2" fill="none" stroke="#222" stroke-width="1.4"/></svg><span class="ts">2025-10-16 23:50:28.663</span><span class="src">{"_timestamp":1760638828663551,"container":"log-generator","level":"error","message":"[2025-10-16T18:20:28] [ERROR] [analytics-service] User behavior analytics event</span></div>
<div class="row" style="top:706.20px"><svg width="7" height="9" viewBox="0 0 7 9"><path d="M1.2 1.2l3 3L1.2 7.2" fill="none" stroke="#222" stroke-width="1.4"/></svg><span class="ts">2025-10-16 23:50:28.663</span><span class="src">{"_timestamp":1760638828663053,"container":"log-generator","level":"error","message":"[2025-10-16T18:20:28] [ERROR] [analytics-service] User behavior analytics event</span></div>
<div class="row" style="top:728.10px"><svg width="7" height="9" viewBox="0 0 7 9"><path d="M1.2 1.2l3 3L1.2 7.2" fill="none" stroke="#222" stroke-width="1.4"/></svg><span class="ts">2025-10-16 23:50:28.661</span><span class="src">{"_timestamp":1760638828661557,"container":"log-generator","level":"info","message":"[2025-10-16T18:20:28] [INFO] [ml-service] Machine learning model inference compl</span></div>
<div class="row" style="top:750.00px"><svg width="7" height="9" viewBox="0 0 7 9"><path d="M1.2 1.2l3 3L1.2 7.2" fill="none" stroke="#222" stroke-width="1.4"/></svg><span class="ts">2025-10-16 23:50:28.661</span><span class="src">{"_timestamp":1760638828661280,"container":"log-generator","level":"info","message":"[2025-10-16T18:20:28] [INFO] [ml-service] Machine learning model inference compl</span></div>
<div class="row" style="top:771.90px"><svg width="7" height="9" viewBox="0 0 7 9"><path d="M1.2 1.2l3 3L1.2 7.2" fill="none" stroke="#222" stroke-width="1.4"/></svg><span class="ts">2025-10-16 23:50:28.660</span><span class="src">{"_timestamp":1760638828660986,"container":"log-generator","level":"info","message":"[2025-10-16T18:20:28] [INFO] [fx-rates] Foreign exchange rate feed and currency </span></div>
<div class="row" style="top:793.80px"><svg width="7" height="9" viewBox="0 0 7 9"><path d="M1.2 1.2l3 3L1.2 7.2" fill="none" stroke="#222" stroke-width="1.4"/></svg><span class="ts">2025-10-16 23:50:28.656</span><span class="src">{"_timestamp":1760638828656887,"container":"log-generator","level":"error","message":"[2025-10-16T18:20:28] [ERROR] [version] API version compatibility mismatch erro</span></div>
<div class="row" style="top:815.70px"><svg width="7" height="9" viewBox="0 0 7 9"><path d="M1.2 1.2l3 3L1.2 7.2" fill="none" stroke="#222" stroke-width="1.4"/></svg><span class="ts">2025-10-16 23:50:28.654</span><span class="src">{"_timestamp":1760638828654705,"container":"log-generator","level":"info","message":"[2025-10-16T18:20:28] [INFO] [mqtt-broker] MQTT message broker communication: pu</span></div>
<div class="row" style="top:837.60px"><svg width="7" height="9" viewBox="0 0 7 9"><path d="M1.2 1.2l3 3L1.2 7.2" fill="none" stroke="#222" stroke-width="1.4"/></svg><span class="ts">2025-10-16 23:50:28.654</span><span class="src">{"_timestamp":1760638828654507,"container":"log-generator","level":"error","message":"[2025-10-16T18:20:28] [ERROR] [shipping-service] Package shipping workflow init</span></div>
<div class="row" style="top:859.50px"><svg width="7" height="9" viewBox="0 0 7 9"><path d="M1.2 1.2l3 3L1.2 7.2" fill="none" stroke="#222" stroke-width="1.4"/></svg><span class="ts">2025-10-16 23:50:28.654</span><span class="src">{"_timestamp":1760638828654229,"container":"log-generator","level":"info","message":"[2025-10-16T18:20:28] [INFO] [drift-detection] Model performance drift monitorin</span></div>
<div class="row" style="top:881.40px"><svg width="7" height="9" viewBox="0 0 7 9"><path d="M1.2 1.2l3 3L1.2 7.2" fill="none" stroke="#222" stroke-width="1.4"/></svg><span class="ts">2025-10-16 23:50:28.653</span><span class="src">{"_timestamp":1760638828653896,"container":"log-generator","level":"info","message":"[2025-10-16T18:20:28] [INFO] [drift-detection] Model performance drift monitorin</span></div>
<div class="row" style="top:903.30px"><svg width="7" height="9" viewBox="0 0 7 9"><path d="M1.2 1.2l3 3L1.2 7.2" fill="none" stroke="#222" stroke-width="1.4"/></svg><span class="ts">2025-10-16 23:50:28.653</span><span class="src">{"_timestamp":1760638828653587,"container":"log-generator","level":"info","message":"[2025-10-16T18:20:28] [INFO] [algo-trading] Algorithmic trading strategy executi</span></div>
<div class="row" style="top:925.20px"><svg width="7" height="9" viewBox="0 0 7 9"><path d="M1.2 1.2l3 3L1.2 7.2" fill="none" stroke="#222" stroke-width="1.4"/></svg><span class="ts">2025-10-16 23:50:28.653</span><span class="src">{"_timestamp":1760638828653325,"container":"log-generator","level":"info","message":"[2025-10-16T18:20:28] [INFO] [portfolio] Portfolio performance and P&amp;L calculati</span></div>
<div class="row" style="top:947.10px"><svg width="7" height="9" viewBox="0 0 7 9"><path d="M1.2 1.2l3 3L1.2 7.2" fill="none" stroke="#222" stroke-width="1.4"/></svg><span class="ts">2025-10-16 23:50:28.653</span><span class="src">{"_timestamp":1760638828653115,"container":"log-generator","level":"info","message":"[2025-10-16T18:20:28] [INFO] [metric-export] Metrics exported: timestamp=2025-10</span></div>
<div class="row" style="top:969.00px"><svg width="7" height="9" viewBox="0 0 7 9"><path d="M1.2 1.2l3 3L1.2 7.2" fill="none" stroke="#222" stroke-width="1.4"/></svg><span class="ts">2025-10-16 23:50:28.652</span><span class="src">{"_timestamp":1760638828652963,"container":"log-generator","level":"info","message":"[2025-10-16T18:20:28] [INFO] [clearing] Central clearing and counterparty risk m</span></div>
<div class="row" style="top:990.90px"><svg width="7" height="9" viewBox="0 0 7 9"><path d="M1.2 1.2l3 3L1.2 7.2" fill="none" stroke="#222" stroke-width="1.4"/></svg><span class="ts">2025-10-16 23:50:28.652</span><span class="src">{"_timestamp":1760638828652693,"container":"log-generator","level":"error","message":"[2025-10-16T18:20:28] [ERROR] [shipping-service] Package shipping workflow init</span></div>
<div id="sb"></div>
<svg style="left:1903px;top:339px" width="9" height="6" viewBox="0 0 9 6"><path d="M0 5.5h9L4.5 0z" fill="#8a8a8a"/></svg>
<div id="thumb"></div>
<svg style="left:1903px;top:1010px" width="9" height="6" viewBox="0 0 9 6"><path d="M0 0h9L4.5 5.5z" fill="#8a8a8a"/></svg>

</body></html>
